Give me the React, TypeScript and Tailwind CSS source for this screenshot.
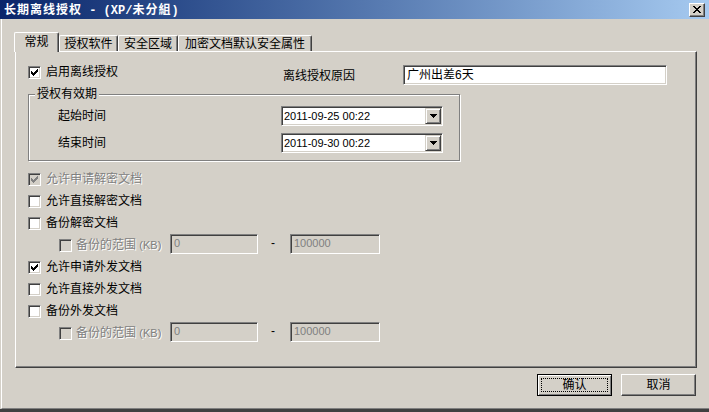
import React from "react";

const CHECK = ["......#", ".....##", "#...###", "##.###.", "#####..", ".###...", "..#...."];
const XMARK = ["##....##", ".##..##.", "..####..", "...##...", "..####..", ".##..##.", "##....##"];
const ARROW = ["#######", ".#####.", "..###..", "...#..."];

function Pixels({ rows, color }: { rows: string[]; color: string }) {
  const w = rows[0].length;
  const h = rows.length;
  return (
    <svg width={w} height={h} viewBox={`0 0 ${w} ${h}`} shapeRendering="crispEdges" className="block">
      {rows.flatMap((r, y) =>
        r.split("").map((c, x) =>
          c === "#" ? <rect key={`${x}-${y}`} x={x} y={y} width={1} height={1} fill={color} /> : null
        )
      )}
    </svg>
  );
}

function Check({ checked, disabled }: { checked?: boolean; disabled?: boolean }) {
  return (
    <span
      className={`w-[13px] h-[13px] shrink-0 border border-t-[#808080] border-l-[#808080] border-b-white border-r-white shadow-[inset_1px_1px_0_#404040,inset_-1px_-1px_0_#d4d0c8] flex items-center justify-center ${
        disabled ? "bg-[#d4d0c8]" : "bg-white"
      }`}
    >
      {checked && <Pixels rows={CHECK} color={disabled ? "#808080" : "#000"} />}
    </span>
  );
}

function CheckRow({ label, checked, disabled }: { label: string; checked?: boolean; disabled?: boolean }) {
  return (
    <div className="h-[22px] flex items-center gap-[5px]">
      <Check checked={checked} disabled={disabled} />
      <span
        className={`leading-[13px] ${disabled ? "text-[#808080] [text-shadow:1px_1px_0_#fff]" : "text-black"}`}
      >
        {label}
      </span>
    </div>
  );
}

function DisabledInput({ value, w }: { value: string; w: string }) {
  return (
    <div
      className={`${w} h-[20px] mb-[3px] bg-[#d4d0c8] border border-t-[#808080] border-l-[#808080] border-b-white border-r-white shadow-[inset_1px_1px_0_#404040,inset_-1px_-1px_0_#d4d0c8] flex items-center pl-[3px] text-[11px] text-[#808080] font-['Liberation_Sans',sans-serif]`}
    >
      {value}
    </div>
  );
}

function RangeRow() {
  return (
    <div className="h-[22px] flex items-center pl-[31px]">
      <div className="w-[111px] flex items-center gap-[4px]">
        <Check disabled />
        <span className="text-[#808080] [text-shadow:1px_1px_0_#fff] leading-[13px]">
          备份的范围 <span className="text-[11px]">(KB)</span>
        </span>
      </div>
      <DisabledInput value="0" w="w-[88px]" />
      <div className="w-[32px] pl-[13px] mb-[3px] text-black leading-[13px]">-</div>
      <DisabledInput value="100000" w="w-[90px]" />
    </div>
  );
}

function Combo({ value }: { value: string }) {
  return (
    <div className="w-[162px] h-[20px] bg-white border border-t-[#808080] border-l-[#808080] border-b-white border-r-white shadow-[inset_1px_1px_0_#404040,inset_-1px_-1px_0_#d4d0c8] flex items-center p-[1px]">
      <span className="flex-1 pl-[1px] text-[11px] font-['Liberation_Sans',sans-serif] text-black leading-[16px]">
        {value}
      </span>
      <span className="w-[16px] h-[16px] bg-[#d4d0c8] border border-t-[#d4d0c8] border-l-[#d4d0c8] border-r-[#404040] border-b-[#404040] shadow-[inset_1px_1px_0_#fff,inset_-1px_-1px_0_#808080] flex items-center justify-center">
        <Pixels rows={ARROW} color="#000" />
      </span>
    </div>
  );
}

export default function App() {
  return (
    <div className="w-[709px] h-[412px] bg-[#d4d0c8] flex flex-col overflow-hidden font-['Liberation_Sans','Noto_Sans_CJK_SC',sans-serif] text-[12px] text-black">
      {/* Title bar */}
      <div className="h-[19px] shrink-0 flex items-center bg-gradient-to-r from-[#0a246a] to-[#a6caf0] pl-[4px] pr-[4px]">
        <span className="pt-[2px] text-white font-bold text-[12px] leading-[14px] whitespace-pre font-['Liberation_Mono','Noto_Sans_CJK_SC',monospace]">
          <span className="tracking-[1px]">长期离线授权</span> - (XP/<span className="tracking-[1px]">未分組</span>)
        </span>
        <div className="ml-auto w-[16px] h-[14px] bg-[#d4d0c8] border border-t-white border-l-white border-r-[#404040] border-b-[#404040] shadow-[inset_-1px_-1px_0_#808080] flex items-center justify-center">
          <Pixels rows={XMARK} color="#000" />
        </div>
      </div>

      {/* Body */}
      <div className="h-[390px] shrink-0 ml-[1px] border-l border-white border-b border-b-[#808080] flex flex-col pt-[13px]">
        {/* Tabs */}
        <div className="h-[19px] flex items-end ml-[12px]">
          <div className="relative z-10 w-[45px] h-[20px] -mb-[1px] bg-[#d4d0c8] border-t border-l border-white border-r border-r-[#404040] rounded-t-[2px] shadow-[inset_-1px_0_0_#808080] flex items-start justify-center pt-[2px]">
            <span className="leading-[14px]">常规</span>
          </div>
          <div className="w-[59px] h-[16px] border-t border-l border-white border-r border-r-[#404040] rounded-t-[2px] shadow-[inset_-1px_0_0_#808080] flex items-start justify-center pt-[1px]">
            <span className="leading-[14px]">授权软件</span>
          </div>
          <div className="w-[60px] h-[16px] border-t border-l border-white border-r border-r-[#404040] rounded-t-[2px] shadow-[inset_-1px_0_0_#808080] flex items-start justify-center pt-[1px]">
            <span className="leading-[14px]">安全区域</span>
          </div>
          <div className="w-[134px] h-[16px] border-t border-l border-white border-r border-r-[#404040] rounded-t-[2px] shadow-[inset_-1px_0_0_#808080] flex items-start justify-center pt-[1px]">
            <span className="leading-[14px]">加密文档默认安全属性</span>
          </div>
        </div>

        {/* Panel */}
        <div className="ml-[13px] w-[682px] h-[317px] shrink-0 border border-t-white border-l-white border-r-[#404040] border-b-[#404040] shadow-[inset_-1px_-1px_0_#808080] pl-[12px] pt-[13px] flex flex-col">
          {/* Row 1 */}
          <div className="h-[20px] flex items-start">
            <div className="w-[255px] h-[13px] mt-[1px] flex items-center gap-[5px]">
              <Check checked />
              <span className="leading-[13px]">启用离线授权</span>
            </div>
            <div className="w-[120px] leading-[20px] pt-[1px]">离线授权原因</div>
            <div className="w-[264px] h-[20px] bg-white border border-t-[#808080] border-l-[#808080] border-b-white border-r-white shadow-[inset_1px_1px_0_#404040,inset_-1px_-1px_0_#d4d0c8] flex items-center pl-[3px] leading-[16px]">
              广州出差6天
            </div>
          </div>

          {/* Group box */}
          <div className="relative mt-[9px] w-[432px] h-[67px] shrink-0 border border-[#808080] shadow-[1px_1px_0_#fff,inset_1px_1px_0_#fff] pt-[11px] pl-[29px] flex flex-col gap-[7px]">
            <span className="absolute left-[6px] top-[-8px] px-[2px] bg-[#d4d0c8] leading-[14px]">授权有效期</span>
            <div className="h-[20px] flex items-center">
              <span className="w-[223px] leading-[14px]">起始时间</span>
              <Combo value="2011-09-25 00:22" />
            </div>
            <div className="h-[20px] flex items-center">
              <span className="w-[223px] leading-[14px]">结束时间</span>
              <Combo value="2011-09-30 00:22" />
            </div>
          </div>

          {/* Checkbox list */}
          <div className="mt-[7px] flex flex-col">
            <CheckRow label="允许申请解密文档" checked disabled />
            <CheckRow label="允许直接解密文档" />
            <CheckRow label="备份解密文档" />
            <RangeRow />
            <CheckRow label="允许申请外发文档" checked />
            <CheckRow label="允许直接外发文档" />
            <CheckRow label="备份外发文档" />
            <RangeRow />
          </div>
        </div>

        {/* Buttons */}
        <div className="mt-[6px] flex justify-end gap-[9px] pr-[13px]">
          <button className="relative w-[75px] h-[22px] bg-[#d4d0c8] border border-black shadow-[inset_1px_1px_0_#fff,inset_-1px_-1px_0_#808080] flex items-center justify-center">
            <span className="absolute inset-[3px] border border-dotted border-black" />
            <span className="leading-[14px]">确认</span>
          </button>
          <button className="w-[75px] h-[22px] bg-[#d4d0c8] border border-t-white border-l-white border-r-[#404040] border-b-[#404040] shadow-[inset_-1px_-1px_0_#808080] flex items-center justify-center">
            <span className="leading-[14px]">取消</span>
          </button>
        </div>
      </div>
      <div className="h-[3px] shrink-0 bg-[#404040]" />
    </div>
  );
}
